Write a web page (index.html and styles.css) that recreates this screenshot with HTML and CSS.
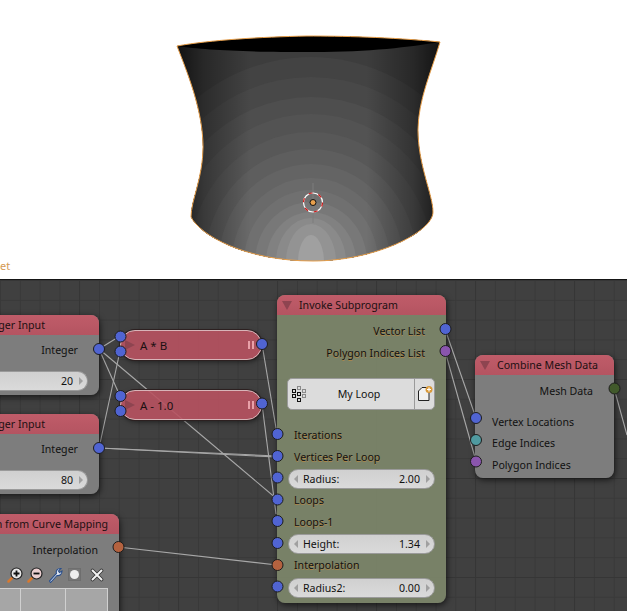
FILE: index.html
```html
<!DOCTYPE html>
<html lang="en">
<head>
	<meta charset="UTF-8">
	<title>Invoke Subprogram</title>
	<link rel="stylesheet" href="styles.css">
</head>
<body>
	<div class="viewport">
		<svg class="mesh" width="627" height="279" viewBox="0 0 627 279">
			<defs>
				<clipPath id="body-clip">
					<path d="M177 46 C187 72 203 110 203 147 C203 178 191 200 191 217 C200 235 245 261 313 261 C375 261 433 232 433 212 C433 195 418 165 418 130 C418 100 432 70 440 42 C390 37 340 36 307 36 C260 37 210 40 177 46Z"/>
				</clipPath>
				<linearGradient id="sides" gradientUnits="userSpaceOnUse" x1="177" y1="0" x2="440" y2="0">
					<stop offset="0" stop-color="#000" stop-opacity="0.7"/>
					<stop offset="0.1" stop-color="#000" stop-opacity="0.35"/>
					<stop offset="0.28" stop-color="#000" stop-opacity="0"/>
					<stop offset="0.72" stop-color="#000" stop-opacity="0"/>
					<stop offset="0.9" stop-color="#000" stop-opacity="0.35"/>
					<stop offset="1" stop-color="#000" stop-opacity="0.7"/>
				</linearGradient>
			</defs>
			<g clip-path="url(#body-clip)">
				<rect x="170" y="30" width="280" height="240" fill="#3d3d3d"/>
				<ellipse cx="311" cy="262" rx="190" ry="205" fill="#434343"/>
				<ellipse cx="311" cy="262" rx="172" ry="185" fill="#484848"/>
				<ellipse cx="311" cy="262" rx="155" ry="165" fill="#4e4e4e"/>
				<ellipse cx="311" cy="262" rx="138" ry="148" fill="#535353"/>
				<ellipse cx="311" cy="262" rx="122" ry="130" fill="#585858"/>
				<ellipse cx="311" cy="262" rx="106" ry="113" fill="#5e5e5e"/>
				<ellipse cx="311" cy="262" rx="92" ry="98" fill="#646464"/>
				<ellipse cx="311" cy="262" rx="79" ry="84" fill="#6a6a6a"/>
				<ellipse cx="311" cy="262" rx="67" ry="72" fill="#707070"/>
				<ellipse cx="311" cy="262" rx="56" ry="60" fill="#787878"/>
				<ellipse cx="311" cy="262" rx="45" ry="50" fill="#818181"/>
				<ellipse cx="311" cy="262" rx="35" ry="44" fill="#8a8a8a"/>
				<ellipse cx="311" cy="262" rx="25" ry="38" fill="#939393"/>
				<ellipse cx="311" cy="262" rx="13" ry="27" fill="#a0a0a0"/>
				<rect x="170" y="30" width="280" height="240" fill="url(#sides)"/>
			</g>
			<path fill="#000" d="M177 46 C205 50 240 52 313 52 C370 52 410 47 440 42 C390 37 340 36 307 36 C260 37 210 40 177 46Z"/>
			<path fill="none" stroke="#e8a04c" stroke-width="1" d="M177 46 C187 72 203 110 203 147 C203 178 191 200 191 217 C200 235 245 261 313 261 C375 261 433 232 433 212 C433 195 418 165 418 130 C418 100 432 70 440 42 C390 37 340 36 307 36 C260 37 210 40 177 46Z"/>
			<line x1="313" y1="183" x2="313" y2="223" stroke="#7d7d7d"/>
			<circle cx="313" cy="202.500" r="9.500" fill="none" stroke="#fff" stroke-width="1.200"/>
			<circle cx="313" cy="202.500" r="9.500" fill="none" stroke="#d01818" stroke-width="1.200" stroke-dasharray="4 6"/>
			<circle cx="313" cy="202.500" r="3" fill="#e8a04c" stroke="#111" stroke-width="1"/>
		</svg>
		<span class="corner-label">et</span>
	</div>

	<div class="editor">
		<svg class="wires" width="627" height="331" viewBox="0 280 627 331">
			<g fill="none" stroke="#a8a8a8" stroke-width="1.100">
				<path d="M99 350 L120 337"/>
				<path d="M99 350 L120 397"/>
				<path d="M99 350 L277 500"/>
				<path d="M99 449 L120 352"/>
				<path d="M99 449 L277 457"/>
				<path d="M99 449 L277 458"/>
				<path d="M262 345 L277 435"/>
				<path d="M262 405 L276 515"/>
				<path d="M118 548 L277 566"/>
				<path d="M445 330 L476 419"/>
				<path d="M445 352 L476 462"/>
				<path d="M614 389 L627 436"/>
			</g>
		</svg>

		<div class="node node-int-a">
			<div class="node-title node-title-int">Integer Input</div>
			<div class="row row-out row-out-int">Integer</div>
			<div class="slider slider-cut"><span></span><span class="num">20</span><i class="arrow-r"></i></div>
		</div>

		<div class="node node-int-b">
			<div class="node-title node-title-int">Integer Input</div>
			<div class="row row-out row-out-int">Integer</div>
			<div class="slider slider-cut"><span></span><span class="num">80</span><i class="arrow-r"></i></div>
		</div>

		<div class="node node-curve">
			<div class="node-title node-title-curve">Interpolation from Curve Mapping</div>
			<div class="row row-out row-out-curve">Interpolation</div>
			<div class="curve-tools">
				<svg width="16" height="16" viewBox="0 0 16 16"><path d="M6 10 L1.500 14.500" stroke="#d8792f" stroke-width="2.500" stroke-linecap="round"/><circle cx="9.500" cy="6.500" r="5.500" fill="#e8e8e8" stroke="#222" stroke-width="1.200"/><path d="M6.500 6.500h6M9.500 3.500v6" stroke="#111" stroke-width="1.800"/></svg>
				<svg width="16" height="16" viewBox="0 0 16 16"><path d="M6 10 L1.500 14.500" stroke="#d8792f" stroke-width="2.500" stroke-linecap="round"/><circle cx="9.500" cy="6.500" r="5.500" fill="#eccfd0" stroke="#222" stroke-width="1.200"/><path d="M6.500 6.500h6" stroke="#111" stroke-width="1.800"/></svg>
				<svg width="16" height="16" viewBox="0 0 16 16"><path d="M2.500 14 L9.500 6.500 C8.500 4 10.500 1 14 1.500 L11.500 4 L12.500 5.500 L15 4 C15 7.500 12.500 9 10 8.500 L3.500 15.500Z" fill="#dfe6f2" stroke="#2a4f8c" stroke-width="1.100"/></svg>
				<span class="tool-box"><i></i></span>
				<svg width="14" height="14" viewBox="0 0 14 14"><path d="M2.500 2.500 L11.500 11.500M11.500 2.500 L2.500 11.500" stroke="#333" stroke-width="3.600" stroke-linecap="round"/><path d="M2.500 2.500 L11.500 11.500M11.500 2.500 L2.500 11.500" stroke="#f2f2f2" stroke-width="2" stroke-linecap="round"/></svg>
			</div>
			<div class="curve-box"><i></i><i></i></div>
		</div>

		<div class="pill pill-mul"><i class="pill-arrow"></i><span class="pill-name">A * B</span><i class="pill-grip"></i></div>
		<div class="pill pill-sub"><i class="pill-arrow"></i><span class="pill-name">A - 1.0</span><i class="pill-grip"></i></div>

		<div class="node node-invoke">
			<div class="node-title"><i class="fold"></i>Invoke Subprogram</div>
			<div class="row row-out row-top fringe">Vector List</div>
			<div class="row row-out fringe">Polygon Indices List</div>
			<div class="loop-button">
				<span class="loop-main">
					<svg class="loop-icon" width="14" height="16" viewBox="0 0 14 16"><g fill="none" stroke-width="1"><g stroke="#8a8a8a"><rect x="5.500" y="0.500" width="3" height="3"/><rect x="10.500" y="3.500" width="3" height="3"/><rect x="10.500" y="8.500" width="3" height="3"/></g><g stroke="#111"><rect x="0.500" y="3.500" width="3" height="3"/><rect x="0.500" y="8.500" width="3" height="3"/><rect x="5.500" y="6.500" width="3" height="3"/><rect x="5.500" y="12.500" width="3" height="3"/></g></g></svg>
					<span class="loop-name">My Loop</span>
				</span>
				<span class="loop-new">
					<svg width="16" height="16" viewBox="0 0 16 16"><path d="M1.500 5 L5 1.500 H12 V14.500 H1.500Z" fill="#f2f2f2" stroke="#222"/><circle cx="12" cy="3.500" r="3.500" fill="#d99a3a"/><path d="M10 3.500h4M12 1.500v4" stroke="#fff" stroke-width="1.200"/></svg>
				</span>
			</div>
			<div class="row row-in row-first fringe">Iterations</div>
			<div class="row row-in fringe">Vertices Per Loop</div>
			<div class="slider"><i class="arrow-l"></i><span class="slider-name">Radius:</span><span class="num">2.00</span><i class="arrow-r"></i></div>
			<div class="row row-in fringe">Loops</div>
			<div class="row row-in fringe">Loops-1</div>
			<div class="slider"><i class="arrow-l"></i><span class="slider-name">Height:</span><span class="num">1.34</span><i class="arrow-r"></i></div>
			<div class="row row-in fringe">Interpolation</div>
			<div class="slider"><i class="arrow-l"></i><span class="slider-name">Radius2:</span><span class="num">0.00</span><i class="arrow-r"></i></div>
		</div>

		<div class="node node-combine">
			<div class="node-title"><i class="fold"></i>Combine Mesh Data</div>
			<div class="row row-out row-top">Mesh Data</div>
			<div class="row row-in row-combine-first">Vertex Locations</div>
			<div class="row row-in">Edge Indices</div>
			<div class="row row-in">Polygon Indices</div>
		</div>

		<svg class="sockets" width="627" height="331" viewBox="0 280 627 331">
			<g stroke="#1d1d1d" stroke-width="1">
				<g fill="#5064d2">
					<circle cx="99" cy="350" r="5.500"/>
					<circle cx="99" cy="449" r="5.500"/>
					<circle cx="120.500" cy="337.500" r="5.500"/>
					<circle cx="120.500" cy="352.500" r="5.500"/>
					<circle cx="120.500" cy="397" r="5.500"/>
					<circle cx="120.500" cy="412" r="5.500"/>
					<circle cx="262" cy="345" r="5.500"/>
					<circle cx="262" cy="404.500" r="5.500"/>
					<circle cx="277.500" cy="435" r="5.500"/>
					<circle cx="277.500" cy="457" r="5.500"/>
					<circle cx="277.500" cy="478.500" r="5.500"/>
					<circle cx="277.500" cy="500.500" r="5.500"/>
					<circle cx="277.500" cy="522" r="5.500"/>
					<circle cx="277.500" cy="544" r="5.500"/>
					<circle cx="277.500" cy="587.500" r="5.500"/>
					<circle cx="445.500" cy="330" r="5.500"/>
					<circle cx="476" cy="419" r="5.500"/>
				</g>
				<g fill="#b4623f">
					<circle cx="118.500" cy="548" r="5.500"/>
					<circle cx="277.500" cy="566" r="5.500"/>
				</g>
				<circle cx="445.500" cy="352" r="5.500" fill="#8a55ad"/>
				<circle cx="476" cy="441" r="5.500" fill="#4f9aa0"/>
				<circle cx="476" cy="462.500" r="5.500" fill="#8a55ad"/>
				<circle cx="614.500" cy="389.500" r="5.500" fill="#41592b"/>
			</g>
		</svg>
	</div>
</body>
</html>
```

FILE: styles.css
```css
html, body {
  margin: 0;
  padding: 0;
  width: 627px;
  height: 611px;
  overflow: hidden;
  background: #fff;
  font-family: "Noto Sans", "Open Sans", sans-serif;
  font-size: 10.600px;
  color: #111;
}

/* 3d view */
.viewport {
  position: relative;
  height: 279px;
  background: #fff;
}
.mesh {
  display: block;
}
.corner-label {
  position: absolute;
  left: 0;
  top: 259px;
  font-size: 11px;
  line-height: 14px;
  color: #d49a55;
}

/* node editor */
.editor {
  position: relative;
  height: 331px;
  border-top: 1px solid #151515;
  overflow: hidden;
  background-color: #404040;
  background-image:
    linear-gradient(#363636 1px, transparent 1px),
    linear-gradient(90deg, #363636 1px, transparent 1px),
    linear-gradient(#393939 1px, transparent 1px),
    linear-gradient(90deg, #393939 1px, transparent 1px);
  background-size: 99px 99px, 99px 99px, 19.800px 19.800px, 19.800px 19.800px;
  background-position: 0 0, 79px 0, 0 0, 0 0;
}
.wires, .sockets {
  position: absolute;
  left: 0;
  top: -1px;
}

.node {
  position: absolute;
  display: flex;
  flex-direction: column;
  box-sizing: border-box;
  border-radius: 8px;
  background: rgba(128, 128, 128, 0.96);
  box-shadow: 1px 2px 6px rgba(0, 0, 0, 0.65);
}
.node-int-a {
  left: -60px;
  top: 35px;
  width: 159px;
  height: 80px;
}
.node-int-b {
  left: -60px;
  top: 134px;
  width: 159px;
  height: 80px;
}
.node-curve {
  left: -100px;
  top: 234px;
  width: 219px;
  height: 140px;
}
.node-invoke {
  left: 277px;
  top: 15px;
  width: 169px;
  height: 308px;
  background: rgba(122, 131, 104, 0.97);
}
.node-combine {
  left: 475px;
  top: 75px;
  width: 139px;
  height: 123px;
}

.node-title {
  display: flex;
  align-items: center;
  flex: none;
  height: 20px;
  padding-left: 22px;
  border-radius: 8px 8px 0 0;
  background: linear-gradient(#c05c69, #b45461);
  line-height: 20px;
  color: #1c1012;
  white-space: nowrap;
}
.node-title-int {
  justify-content: flex-end;
  padding: 0 54px 0 0;
}
.node-title-curve {
  justify-content: flex-end;
  padding: 0 11px 0 0;
}
.fold {
  width: 0;
  height: 0;
  margin: 0 7px 0 -17px;
  border-left: 5px solid transparent;
  border-right: 5px solid transparent;
  border-top: 9px solid #8e4450;
}

.row {
  flex: none;
  height: 21.500px;
  line-height: 21px;
  white-space: nowrap;
}
.row-out {
  padding-right: 21px;
  text-align: right;
}
.row-top {
  margin-top: 6px;
}
.row-out-int {
  margin-top: 5px;
}
.row-out-curve {
  margin-top: 6px;
}
.row-in {
  padding-left: 17px;
}
.row-first {
  margin-top: 15px;
}
.row-combine-first {
  margin-top: 9px;
}
.fringe {
  text-shadow: 0 1px 0 rgba(214, 140, 50, 0.55);
}

/* number fields */
.slider {
  display: flex;
  align-items: center;
  flex: none;
  box-sizing: border-box;
  height: 20px;
  margin: 1px 11px;
  padding: 0 4px 0 5px;
  border: 1px solid #9a9a9a;
  border-radius: 10px;
  background: linear-gradient(#d0d0d0, #dadada);
  line-height: 18px;
}
.slider-name {
  margin-left: 5px;
}
.num {
  margin-left: auto;
  margin-right: 6px;
}
.slider-cut {
  width: 148px;
  margin: 9px 0 0;
  border-radius: 0 10px 10px 0;
  border-left: 0;
}
.arrow-l, .arrow-r {
  width: 0;
  height: 0;
  border-top: 4px solid transparent;
  border-bottom: 4px solid transparent;
}
.arrow-l {
  border-right: 4px solid #a0a0a0;
}
.arrow-r {
  border-left: 4px solid #a0a0a0;
}

/* curve mapping */
.curve-tools {
  display: flex;
  align-items: center;
  justify-content: flex-end;
  gap: 4px;
  margin-top: 3px;
  padding-right: 15px;
  height: 20px;
}
.curve-tools svg {
  display: block;
}
.tool-box {
  display: flex;
  align-items: center;
  justify-content: center;
  box-sizing: border-box;
  width: 13px;
  height: 13px;
  margin: 0 5px 0 1px;
  border: 1px solid #6e6e6e;
  background: #777;
}
.tool-box i {
  width: 9px;
  height: 9px;
  border-radius: 50%;
  background: #eee;
}
.curve-box {
  display: flex;
  box-sizing: border-box;
  width: 208px;
  height: 60px;
  margin-top: 3px;
  border: 1px solid #d0d0d0;
  background: #a6a6a6;
}
.curve-box i {
  width: 44px;
  border-right: 1px solid #d0d0d0;
}
.curve-box i:first-child {
  width: 119px;
}

/* collapsed math nodes */
.pill {
  position: absolute;
  display: flex;
  align-items: center;
  box-sizing: border-box;
  left: 120px;
  width: 142px;
  height: 30px;
  padding: 0 7px 0 4px;
  border: 1px solid #d8b4b8;
  border-radius: 15px;
  background: rgba(184, 82, 96, 0.9);
  box-shadow: 0 0 0 1px #2c2020, 1px 2px 5px rgba(0, 0, 0, 0.5);
}
.pill-mul {
  top: 50px;
}
.pill-sub {
  top: 110px;
}
.pill-arrow {
  width: 0;
  height: 0;
  border-top: 5px solid transparent;
  border-bottom: 5px solid transparent;
  border-left: 10px solid #8e4450;
}
.pill-name {
  margin-left: 5px;
  font-size: 11.500px;
  color: #1c1012;
}
.pill-grip {
  width: 2px;
  height: 8px;
  margin-left: auto;
  border-left: 2px solid #e8a0a8;
  border-right: 2px solid #e8a0a8;
}

/* subprogram selector */
.loop-button {
  display: flex;
  flex: none;
  box-sizing: border-box;
  height: 32px;
  margin: 14px 11px 0 10px;
  border: 1px solid #9a9a9a;
  border-radius: 5px;
  background: #dcdcdc;
}
.loop-main {
  position: relative;
  display: flex;
  align-items: center;
  justify-content: center;
  flex: 1;
}
.loop-icon {
  position: absolute;
  left: 4px;
  top: 7px;
}
.loop-name {
  margin-left: 16px;
}
.loop-new {
  display: flex;
  align-items: center;
  justify-content: center;
  width: 19px;
  border-left: 1px solid #9a9a9a;
}
```
